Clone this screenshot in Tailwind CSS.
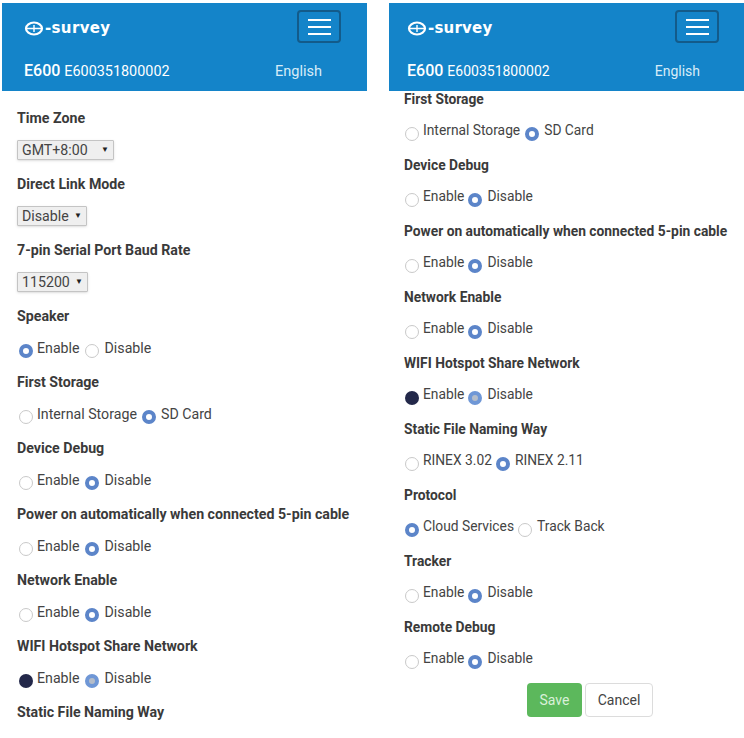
<!DOCTYPE html>
<html lang="en">
<head>
  <meta charset="UTF-8" />
  <title>E600 settings</title>
  <script src="https://cdn.jsdelivr.net/npm/@tailwindcss/browser@4"></script>
</head>
<body class="bg-white text-[#444] font-['Roboto',sans-serif] h-[738px] overflow-hidden">
  <div class="flex h-[738px] overflow-hidden">

    <!-- Left phone screen -->
    <section class="ml-[2px] mt-[3px] w-[365px] shrink-0 flex flex-col overflow-hidden text-[14.2px]">
      <header class="bg-[#1484c9] h-[88px] shrink-0 relative text-white">
        <div class="flex items-center justify-between h-[46px] pl-[22px] pr-[26px] pt-[1px]">
          <div class="flex items-center mt-[4px] font-['DejaVu_Sans',sans-serif] font-bold text-[15px] tracking-[0.35px]">
            <svg width="21" height="15" viewBox="0 0 21 15" fill="none" stroke="white" stroke-width="2.2"><ellipse cx="10" cy="7.5" rx="8" ry="6"/><path d="M2 7.5H18M10 4V11" stroke-width="1.4"/></svg>
            <span>-survey</span>
          </div>
          <button class="w-[44px] h-[33px] border-2 border-[#135b8a] rounded-[4px] flex flex-col items-center justify-center gap-[5px]">
            <span class="block w-[23px] h-[2px] bg-white"></span>
            <span class="block w-[23px] h-[2px] bg-white"></span>
            <span class="block w-[23px] h-[2px] bg-white"></span>
          </button>
        </div>
        <div class="flex items-center justify-between pl-[22px] pr-[45px] h-[34px] pt-[9px]">
          <div class="flex items-baseline gap-[4px]"><span class="text-[16px] font-medium">E600</span><span class="text-[14.4px]">E600351800002</span></div>
          <span class="text-[14.5px] mt-[2px] text-[#d8ecf8]">English</span>
        </div>
      </header>
      <div class="pl-[15px] pt-[13px]">
        <div class="h-[66px]">
          <p class="font-bold text-[#3a3a3a] h-[33px] leading-[28px]">Time Zone</p>
          <div class="relative w-[97px] h-[20px] mt-[3px]">
            <select class="appearance-none w-full h-full bg-[#efefef] border border-[#c4c4c4] shadow-sm rounded-[1px] pl-[4px] leading-[18px]"><option>GMT+8:00</option></select>
            <span class="absolute right-[5px] top-[5px] text-[8px] leading-[10px] text-[#222] pointer-events-none">▼</span>
          </div>
        </div>
        <div class="h-[66px]">
          <p class="font-bold text-[#3a3a3a] h-[33px] leading-[28px]">Direct Link Mode</p>
          <div class="relative w-[70px] h-[20px] mt-[3px]">
            <select class="appearance-none w-full h-full bg-[#efefef] border border-[#c4c4c4] shadow-sm rounded-[1px] pl-[4px] leading-[18px]"><option>Disable</option></select>
            <span class="absolute right-[5px] top-[5px] text-[8px] leading-[10px] text-[#222] pointer-events-none">▼</span>
          </div>
        </div>
        <div class="h-[66px]">
          <p class="font-bold text-[#3a3a3a] h-[33px] leading-[28px]">7-pin Serial Port Baud Rate</p>
          <div class="relative w-[71px] h-[20px] mt-[3px]">
            <select class="appearance-none w-full h-full bg-[#efefef] border border-[#c4c4c4] shadow-sm rounded-[1px] pl-[4px] leading-[18px]"><option>115200</option></select>
            <span class="absolute right-[5px] top-[5px] text-[8px] leading-[10px] text-[#222] pointer-events-none">▼</span>
          </div>
        </div>
        <div class="h-[66px]">
          <p class="font-bold text-[#3a3a3a] h-[33px] leading-[28px]">Speaker</p>
          <div class="flex items-center h-[20px] mt-[4px]">
            <span class="w-[14px] h-[14px] mt-[3px] ml-[2px] rounded-full border-[4px] border-[#5c85c9] bg-white"></span>
            <span class="ml-[4px]">Enable</span>
            <span class="w-[14px] h-[14px] mt-[3px] ml-[5px] rounded-full border border-[#c9c9c9] bg-white"></span>
            <span class="ml-[6px]">Disable</span>
          </div>
        </div>
        <div class="h-[66px]">
          <p class="font-bold text-[#3a3a3a] h-[33px] leading-[28px]">First Storage</p>
          <div class="flex items-center h-[20px] mt-[4px]">
            <span class="w-[14px] h-[14px] mt-[3px] ml-[2px] rounded-full border border-[#c9c9c9] bg-white"></span>
            <span class="ml-[4px]">Internal Storage</span>
            <span class="w-[14px] h-[14px] mt-[3px] ml-[5px] rounded-full border-[4px] border-[#5c85c9] bg-white"></span>
            <span class="ml-[5px]">SD Card</span>
          </div>
        </div>
        <div class="h-[66px]">
          <p class="font-bold text-[#3a3a3a] h-[33px] leading-[28px]">Device Debug</p>
          <div class="flex items-center h-[20px] mt-[4px]">
            <span class="w-[14px] h-[14px] mt-[3px] ml-[2px] rounded-full border border-[#c9c9c9] bg-white"></span>
            <span class="ml-[4px]">Enable</span>
            <span class="w-[14px] h-[14px] mt-[3px] ml-[5px] rounded-full border-[4px] border-[#5c85c9] bg-white"></span>
            <span class="ml-[6px]">Disable</span>
          </div>
        </div>
        <div class="h-[66px]">
          <p class="font-bold text-[#3a3a3a] h-[33px] leading-[28px]">Power on automatically when connected 5-pin cable</p>
          <div class="flex items-center h-[20px] mt-[4px]">
            <span class="w-[14px] h-[14px] mt-[3px] ml-[2px] rounded-full border border-[#c9c9c9] bg-white"></span>
            <span class="ml-[4px]">Enable</span>
            <span class="w-[14px] h-[14px] mt-[3px] ml-[5px] rounded-full border-[4px] border-[#5c85c9] bg-white"></span>
            <span class="ml-[6px]">Disable</span>
          </div>
        </div>
        <div class="h-[66px]">
          <p class="font-bold text-[#3a3a3a] h-[33px] leading-[28px]">Network Enable</p>
          <div class="flex items-center h-[20px] mt-[4px]">
            <span class="w-[14px] h-[14px] mt-[3px] ml-[2px] rounded-full border border-[#c9c9c9] bg-white"></span>
            <span class="ml-[4px]">Enable</span>
            <span class="w-[14px] h-[14px] mt-[3px] ml-[5px] rounded-full border-[4px] border-[#5c85c9] bg-white"></span>
            <span class="ml-[6px]">Disable</span>
          </div>
        </div>
        <div class="h-[66px]">
          <p class="font-bold text-[#3a3a3a] h-[33px] leading-[28px]">WIFI Hotspot Share Network</p>
          <div class="flex items-center h-[20px] mt-[4px]">
            <span class="w-[14px] h-[14px] mt-[3px] ml-[2px] rounded-full bg-[#23284a]"></span>
            <span class="ml-[4px]">Enable</span>
            <span class="w-[14px] h-[14px] mt-[3px] ml-[5px] rounded-full border-[4px] border-[#6f97d6] bg-[#b5bdc9]"></span>
            <span class="ml-[6px]">Disable</span>
          </div>
        </div>
        <div class="h-[66px]">
          <p class="font-bold text-[#3a3a3a] h-[33px] leading-[28px]">Static File Naming Way</p>
        </div>
      </div>
    </section>

    <!-- Right phone screen -->
    <section class="ml-[22px] mt-[3px] w-[355px] shrink-0 flex flex-col overflow-hidden text-[13.8px]">
      <header class="bg-[#1484c9] h-[88px] shrink-0 relative z-10 text-white">
        <div class="flex items-center justify-between h-[46px] pl-[18px] pr-[25px] pt-[1px]">
          <div class="flex items-center mt-[4px] font-['DejaVu_Sans',sans-serif] font-bold text-[15px] tracking-[0.2px]">
            <svg width="21" height="15" viewBox="0 0 21 15" fill="none" stroke="white" stroke-width="2.2"><ellipse cx="10" cy="7.5" rx="8" ry="6"/><path d="M2 7.5H18M10 4V11" stroke-width="1.4"/></svg>
            <span>-survey</span>
          </div>
          <button class="w-[44px] h-[33px] border-2 border-[#135b8a] rounded-[4px] flex flex-col items-center justify-center gap-[5px]">
            <span class="block w-[23px] h-[2px] bg-white"></span>
            <span class="block w-[23px] h-[2px] bg-white"></span>
            <span class="block w-[23px] h-[2px] bg-white"></span>
          </button>
        </div>
        <div class="flex items-center justify-between pl-[18px] pr-[44px] h-[34px] pt-[9px]">
          <div class="flex items-baseline gap-[4px]"><span class="text-[16px] font-medium">E600</span><span class="text-[14px]">E600351800002</span></div>
          <span class="text-[14px] mt-[2px] text-[#d8ecf8]">English</span>
        </div>
      </header>
      <div class="pl-[15px] mt-[-6px]">
        <div class="h-[66px]">
          <p class="font-bold text-[#3a3a3a] h-[33px] leading-[28px]">First Storage</p>
          <div class="flex items-center h-[20px] mt-[2px]">
            <span class="w-[14px] h-[14px] mt-[7px] ml-[1px] rounded-full border border-[#c9c9c9] bg-white"></span>
            <span class="ml-[4px]">Internal Storage</span>
            <span class="w-[14px] h-[14px] mt-[7px] ml-[5px] rounded-full border-[4px] border-[#5c85c9] bg-white"></span>
            <span class="ml-[5px]">SD Card</span>
          </div>
        </div>
        <div class="h-[66px]">
          <p class="font-bold text-[#3a3a3a] h-[33px] leading-[28px]">Device Debug</p>
          <div class="flex items-center h-[20px] mt-[2px]">
            <span class="w-[14px] h-[14px] mt-[7px] ml-[1px] rounded-full border border-[#c9c9c9] bg-white"></span>
            <span class="ml-[4px]">Enable</span>
            <span class="w-[14px] h-[14px] mt-[7px] ml-[4px] rounded-full border-[4px] border-[#5c85c9] bg-white"></span>
            <span class="ml-[5px]">Disable</span>
          </div>
        </div>
        <div class="h-[66px]">
          <p class="font-bold text-[#3a3a3a] h-[33px] leading-[28px]">Power on automatically when connected 5-pin cable</p>
          <div class="flex items-center h-[20px] mt-[2px]">
            <span class="w-[14px] h-[14px] mt-[7px] ml-[1px] rounded-full border border-[#c9c9c9] bg-white"></span>
            <span class="ml-[4px]">Enable</span>
            <span class="w-[14px] h-[14px] mt-[7px] ml-[4px] rounded-full border-[4px] border-[#5c85c9] bg-white"></span>
            <span class="ml-[5px]">Disable</span>
          </div>
        </div>
        <div class="h-[66px]">
          <p class="font-bold text-[#3a3a3a] h-[33px] leading-[28px]">Network Enable</p>
          <div class="flex items-center h-[20px] mt-[2px]">
            <span class="w-[14px] h-[14px] mt-[7px] ml-[1px] rounded-full border border-[#c9c9c9] bg-white"></span>
            <span class="ml-[4px]">Enable</span>
            <span class="w-[14px] h-[14px] mt-[7px] ml-[4px] rounded-full border-[4px] border-[#5c85c9] bg-white"></span>
            <span class="ml-[5px]">Disable</span>
          </div>
        </div>
        <div class="h-[66px]">
          <p class="font-bold text-[#3a3a3a] h-[33px] leading-[28px]">WIFI Hotspot Share Network</p>
          <div class="flex items-center h-[20px] mt-[2px]">
            <span class="w-[14px] h-[14px] mt-[7px] ml-[1px] rounded-full bg-[#23284a]"></span>
            <span class="ml-[4px]">Enable</span>
            <span class="w-[14px] h-[14px] mt-[7px] ml-[4px] rounded-full border-[4px] border-[#6f97d6] bg-[#b5bdc9]"></span>
            <span class="ml-[5px]">Disable</span>
          </div>
        </div>
        <div class="h-[66px]">
          <p class="font-bold text-[#3a3a3a] h-[33px] leading-[28px]">Static File Naming Way</p>
          <div class="flex items-center h-[20px] mt-[2px]">
            <span class="w-[14px] h-[14px] mt-[7px] ml-[1px] rounded-full border border-[#c9c9c9] bg-white"></span>
            <span class="ml-[4px]">RINEX 3.02</span>
            <span class="w-[14px] h-[14px] mt-[7px] ml-[4px] rounded-full border-[4px] border-[#5c85c9] bg-white"></span>
            <span class="ml-[5px]">RINEX 2.11</span>
          </div>
        </div>
        <div class="h-[66px]">
          <p class="font-bold text-[#3a3a3a] h-[33px] leading-[28px]">Protocol</p>
          <div class="flex items-center h-[20px] mt-[2px]">
            <span class="w-[14px] h-[14px] mt-[7px] ml-[1px] rounded-full border-[4px] border-[#5c85c9] bg-white"></span>
            <span class="ml-[4px]">Cloud Services</span>
            <span class="w-[14px] h-[14px] mt-[7px] ml-[4px] rounded-full border border-[#c9c9c9] bg-white"></span>
            <span class="ml-[5px]">Track Back</span>
          </div>
        </div>
        <div class="h-[66px]">
          <p class="font-bold text-[#3a3a3a] h-[33px] leading-[28px]">Tracker</p>
          <div class="flex items-center h-[20px] mt-[2px]">
            <span class="w-[14px] h-[14px] mt-[7px] ml-[1px] rounded-full border border-[#c9c9c9] bg-white"></span>
            <span class="ml-[4px]">Enable</span>
            <span class="w-[14px] h-[14px] mt-[7px] ml-[4px] rounded-full border-[4px] border-[#5c85c9] bg-white"></span>
            <span class="ml-[5px]">Disable</span>
          </div>
        </div>
        <div class="h-[66px]">
          <p class="font-bold text-[#3a3a3a] h-[33px] leading-[28px]">Remote Debug</p>
          <div class="flex items-center h-[20px] mt-[2px]">
            <span class="w-[14px] h-[14px] mt-[7px] ml-[1px] rounded-full border border-[#c9c9c9] bg-white"></span>
            <span class="ml-[4px]">Enable</span>
            <span class="w-[14px] h-[14px] mt-[7px] ml-[4px] rounded-full border-[4px] border-[#5c85c9] bg-white"></span>
            <span class="ml-[5px]">Disable</span>
          </div>
        </div>
        <div class="flex gap-[3px] pl-[123px] mt-[4px] text-[14px]">
          <button class="w-[55px] h-[34px] bg-[#5cb85c] text-[#d9f0d9] rounded-[4px]">Save</button>
          <button class="w-[68px] h-[34px] bg-white border border-[#dcdcdc] text-[#444] rounded-[4px]">Cancel</button>
        </div>
      </div>
    </section>
  </div>
</body>
</html>
